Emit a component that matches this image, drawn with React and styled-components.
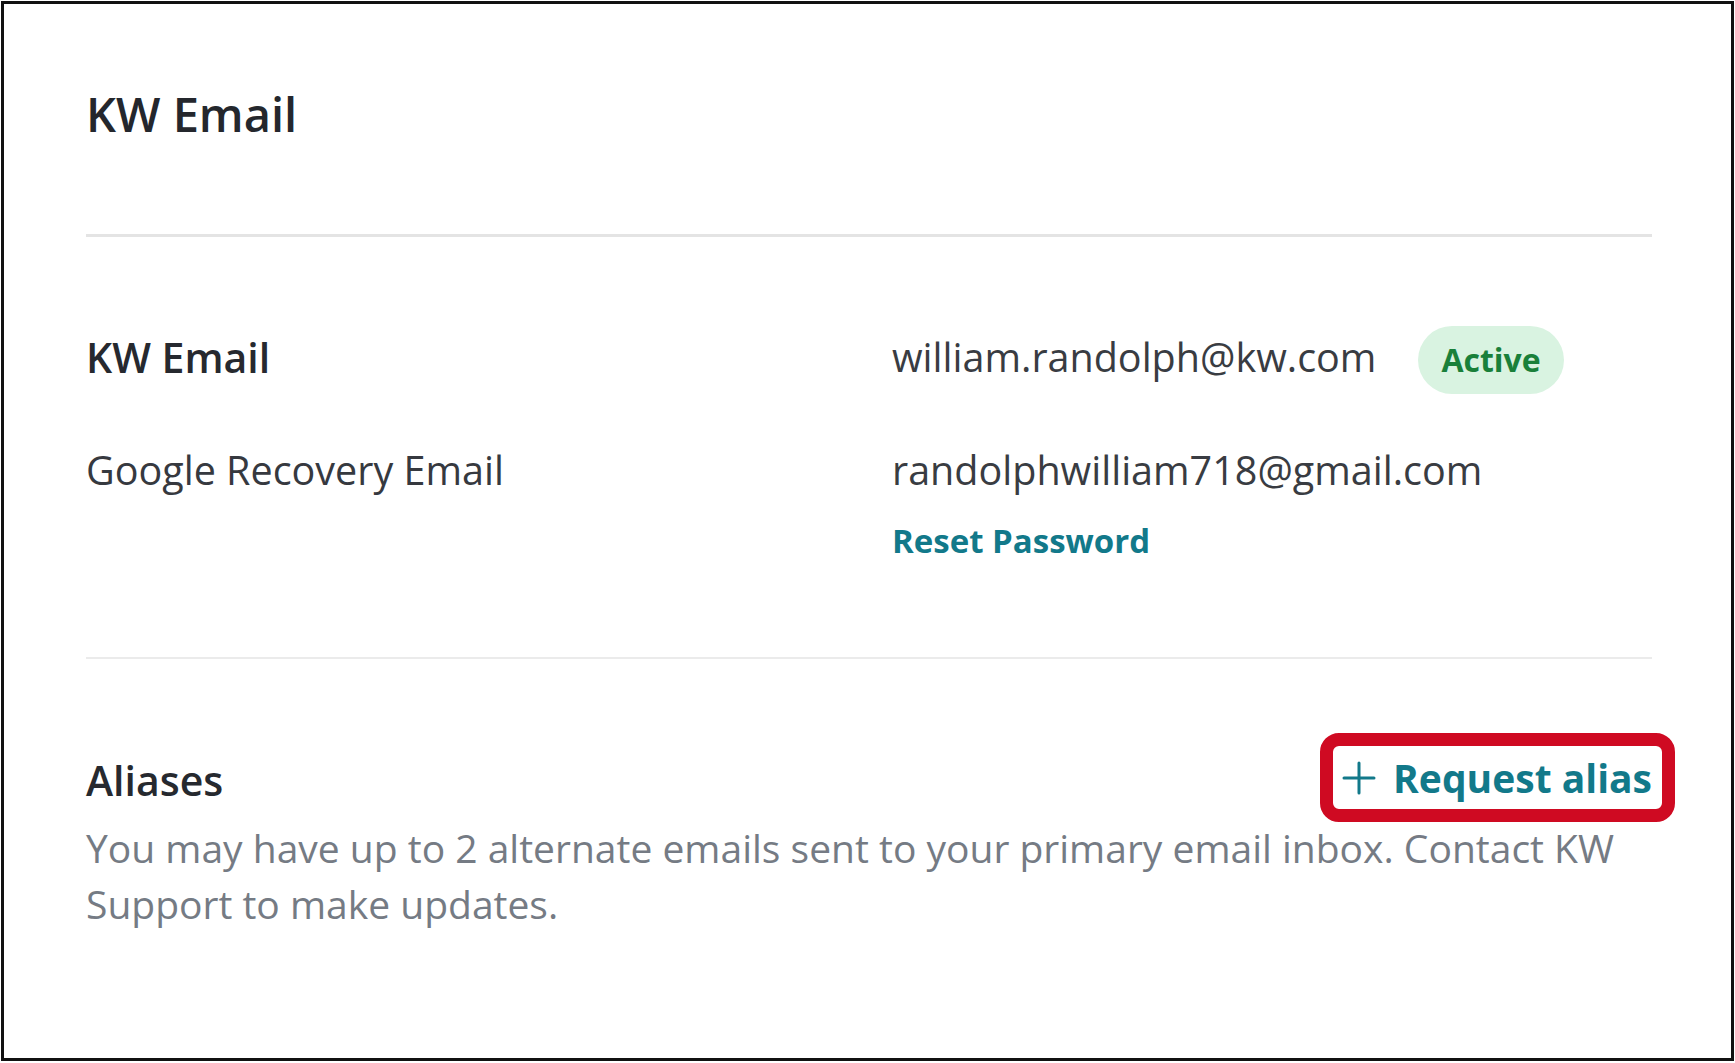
import styled, { createGlobalStyle } from 'styled-components';

const GlobalStyle = createGlobalStyle`
  html, body {
    margin: 0;
    padding: 0;
    background: #ffffff;
  }
  body {
    font-family: 'Open Sans', 'Noto Sans', sans-serif;
    -webkit-font-smoothing: antialiased;
  }
`;

const Frame = styled.div`
  box-sizing: border-box;
  width: 1733px;
  height: 1060px;
  margin: 1px 0 0 1px;
  border: 3px solid #111111;
  background: #ffffff;
  padding: 82px 79px 0 82px;
  display: flex;
  flex-direction: column;
`;

const Title = styled.h1`
  margin: 0;
  font-size: 47px;
  line-height: 56px;
  font-weight: 600;
  color: #24272d;
`;

const Divider = styled.hr`
  border: 0;
  margin: ${(p) => p.$above}px 0 ${(p) => p.$below}px;
  height: ${(p) => p.$thick}px;
  background: ${(p) => p.$color};
`;

const Rows = styled.div`
  display: flex;
  flex-direction: column;
`;

const Row = styled.div`
  display: grid;
  grid-template-columns: 806px 1fr;
  align-items: ${(p) => (p.$top ? 'start' : 'center')};
  margin-top: ${(p) => p.$gap || 0}px;
`;

const Label = styled.div`
  font-size: ${(p) => (p.$strong ? 41 : 39.5)}px;
  font-weight: ${(p) => (p.$strong ? 600 : 400)};
  color: ${(p) => (p.$strong ? '#26292f' : '#36393f')};
  line-height: 52px;
`;

const Value = styled.div`
  display: flex;
  flex-direction: column;
  align-items: flex-start;
  gap: 23px;
`;

const ValueLine = styled.div`
  display: flex;
  align-items: center;
  gap: 42px;
  font-size: 39.5px;
  line-height: 52px;
  color: #393c42;
`;

const Badge = styled.span`
  display: inline-flex;
  align-items: center;
  height: 68px;
  margin: 3px 0 -3px;
  padding: 0 23px;
  border-radius: 34px;
  background: #d9f3e1;
  color: #19803a;
  font-size: 32px;
  font-weight: 700;
`;

const TextLink = styled.a`
  font-size: 33px;
  line-height: 44px;
  font-weight: 700;
  color: #12798a;
  text-decoration: none;
`;

const AliasHead = styled.div`
  display: flex;
  align-items: center;
  justify-content: space-between;
`;

const AddButton = styled.button`
  display: inline-flex;
  align-items: center;
  gap: 17px;
  height: 63px;
  margin: -4px -10px 0 0;
  padding: 0 10px 0 9px;
  border: 0;
  background: #ffffff;
  color: #12798a;
  font-family: inherit;
  font-size: 39px;
  font-weight: 700;
  cursor: pointer;
  border-radius: 6px;
  outline: 13px solid #cf0a22;
  outline-offset: 0;
`;

const Description = styled.p`
  margin: 11px 0 0;
  font-size: 39px;
  line-height: 56px;
  color: #757b84;
`;

const Plus = () => (
  <svg width="34" height="34" viewBox="0 0 34 34" fill="none">
    <path d="M17 2v30M2 17h30" stroke="#12798a" strokeWidth="3" strokeLinecap="round" />
  </svg>
);

export default function App() {
  return (
    <>
      <GlobalStyle />
      <Frame>
        <Title>KW Email</Title>
        <Divider $above={92} $below={86} $thick={3} $color="#e4e4e4" />
        <Rows>
          <Row>
            <Label $strong>KW Email</Label>
            <ValueLine>
              william.randolph@kw.com
              <Badge>Active</Badge>
            </ValueLine>
          </Row>
          <Row $top $gap={53}>
            <Label>Google Recovery Email</Label>
            <Value>
              <ValueLine>randolphwilliam718@gmail.com</ValueLine>
              <TextLink href="#">Reset Password</TextLink>
            </Value>
          </Row>
        </Rows>
        <Divider $above={94} $below={91} $thick={2} $color="#ebebeb" />
        <AliasHead>
          <Label $strong>Aliases</Label>
          <AddButton>
            <Plus />
            Request alias
          </AddButton>
        </AliasHead>
        <Description>
          You may have up to 2 alternate emails sent to your primary email inbox. Contact KW Support to make updates.
        </Description>
      </Frame>
    </>
  );
}
